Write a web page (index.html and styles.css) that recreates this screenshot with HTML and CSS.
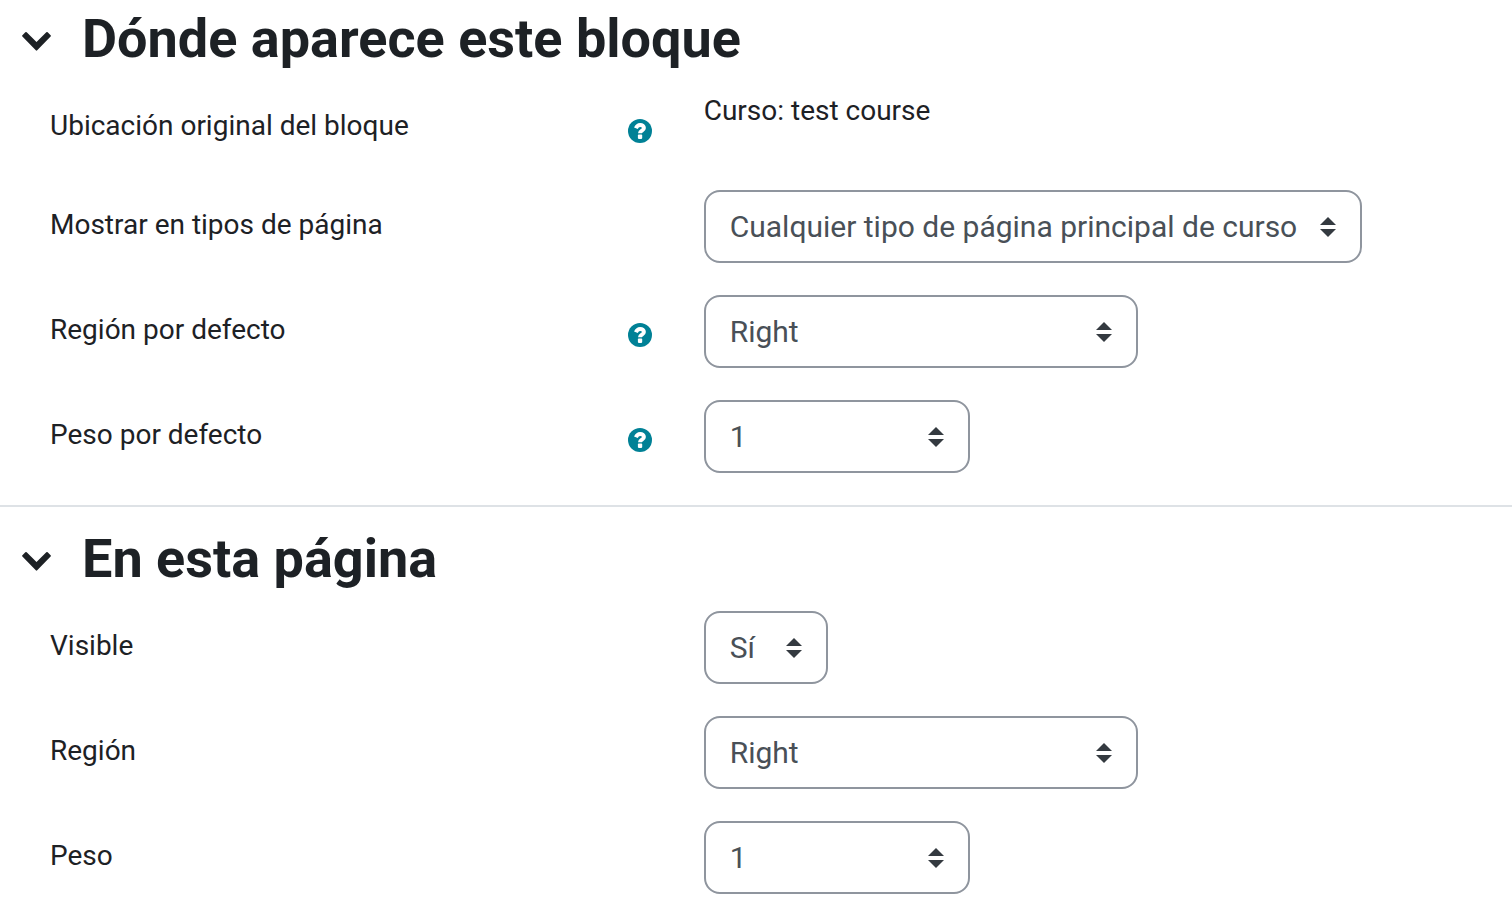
FILE: index.html
```html
<!DOCTYPE html>
<html lang="es">
<head>
    <meta charset="UTF-8">
    <meta name="viewport" content="width=device-width, initial-scale=1.0">
    <title>Configurar bloque</title>
    <link rel="stylesheet" href="styles.css">
</head>
<body>
    <svg class="sprite" aria-hidden="true">
        <symbol id="icon-chevron" viewBox="0 0 30 22">
            <path d="M0.400 6.200 3.300 3.200Q4 2.600 4.700 3.200L14.500 13 24.300 3.200Q25 2.600 25.700 3.200L28.600 6.200Q29.200 6.900 28.600 7.600L15.200 21.300Q14.500 22 13.800 21.300L0.400 7.600Q-0.200 6.900 0.400 6.200z" fill="currentColor"/>
        </symbol>
        <symbol id="icon-help" viewBox="0 0 24 24">
            <circle cx="12" cy="12" r="12" fill="currentColor"/>
            <path d="M7.900 9.300C8.800 7.200 10 6 12.100 6c2.300 0 3.800 1.300 3.800 3 0 2.700-3.900 2.600-3.900 5.300" fill="none" stroke="#fff" stroke-width="4"/>
            <rect x="9.900" y="15.600" width="4.300" height="4.300" rx="0.800" fill="#fff"/>
        </symbol>
        <symbol id="icon-sort" viewBox="0 0 16 20">
            <path d="M0 8 8 0l8 8zM0 12 8 20l8-8z" fill="#343a40"/>
        </symbol>
    </svg>
    <form>
        <section>
            <div class="section-header">
                <button type="button" class="toggle" aria-label="Colapsar"><svg><use href="#icon-chevron"/></svg></button>
                <h2>Dónde aparece este bloque</h2>
            </div>
            <div class="rows">
                <div class="row">
                    <div class="label">
                        <span>Ubicación original del bloque</span>
                        <button type="button" class="help" aria-label="Ayuda"><svg><use href="#icon-help"/></svg></button>
                    </div>
                    <div class="static">Curso: test course</div>
                </div>
                <div class="row">
                    <div class="label">
                        <label for="pagetypes">Mostrar en tipos de página</label>
                    </div>
                    <div class="select wide">
                        <select id="pagetypes"><option>Cualquier tipo de página principal de curso</option></select>
                        <svg><use href="#icon-sort"/></svg>
                    </div>
                </div>
                <div class="row">
                    <div class="label">
                        <label for="defaultregion">Región por defecto</label>
                        <button type="button" class="help" aria-label="Ayuda"><svg><use href="#icon-help"/></svg></button>
                    </div>
                    <div class="select region">
                        <select id="defaultregion"><option>Right</option></select>
                        <svg><use href="#icon-sort"/></svg>
                    </div>
                </div>
                <div class="row">
                    <div class="label">
                        <label for="defaultweight">Peso por defecto</label>
                        <button type="button" class="help" aria-label="Ayuda"><svg><use href="#icon-help"/></svg></button>
                    </div>
                    <div class="select weight">
                        <select id="defaultweight"><option>1</option></select>
                        <svg><use href="#icon-sort"/></svg>
                    </div>
                </div>
            </div>
        </section>
        <section>
            <div class="section-header">
                <button type="button" class="toggle" aria-label="Colapsar"><svg><use href="#icon-chevron"/></svg></button>
                <h2>En esta página</h2>
            </div>
            <div class="rows">
                <div class="row">
                    <div class="label">
                        <label for="visible">Visible</label>
                    </div>
                    <div class="select yesno">
                        <select id="visible"><option>Sí</option><option>No</option></select>
                        <svg><use href="#icon-sort"/></svg>
                    </div>
                </div>
                <div class="row">
                    <div class="label">
                        <label for="region">Región</label>
                    </div>
                    <div class="select region">
                        <select id="region"><option>Right</option></select>
                        <svg><use href="#icon-sort"/></svg>
                    </div>
                </div>
                <div class="row">
                    <div class="label">
                        <label for="weight">Peso</label>
                    </div>
                    <div class="select weight">
                        <select id="weight"><option>1</option></select>
                        <svg><use href="#icon-sort"/></svg>
                    </div>
                </div>
            </div>
        </section>
    </form>
</body>
</html>
```
FILE: styles.css
```css
* {
    box-sizing: border-box;
}

body {
    margin: 0;
    background-color: #fff;
    color: #1d2125;
    font-family: Roboto, 'Liberation Sans', sans-serif;
    font-size: 28px;
    line-height: 40px;
}

.sprite {
    display: none;
}

section {
    padding-top: 20px;
}

section:first-child {
    padding-top: 7px;
    border-bottom: 2px solid #dee2e6;
}

.section-header {
    display: flex;
    align-items: center;
    gap: 30px;
    margin-bottom: 20px;
    padding-left: 22px;
}

h2 {
    margin: 0;
    font-size: 54px;
    line-height: 64px;
    font-weight: 700;
}

button {
    padding: 0;
    border: none;
    background: none;
    cursor: pointer;
}

button svg {
    display: block;
    width: 100%;
    height: 100%;
}

.toggle {
    width: 30px;
    height: 22px;
    margin-top: 2px;
    color: #1d2125;
}

.help {
    width: 24px;
    height: 24px;
    margin-top: 13px;
    color: #008196;
}

.rows {
    display: grid;
    gap: 32px;
    padding: 0 6px 32px 50px;
}

.row {
    display: grid;
    grid-template-columns: minmax(0, 3fr) minmax(0, 4fr);
    column-gap: 52px;
    align-items: start;
}

.label {
    display: flex;
    justify-content: space-between;
    align-items: flex-start;
    min-height: 67px;
    padding-top: 15px;
}

.select {
    position: relative;
    max-width: 100%;
}

.select select {
    appearance: none;
    display: block;
    width: 100%;
    height: 73px;
    padding: 0 56px 0 24px;
    border: 2px solid #8f959e;
    border-radius: 16px;
    background-color: #fff;
    color: #495057;
    font-family: inherit;
    font-size: 30px;
}

.select svg {
    position: absolute;
    top: 27px;
    right: 26px;
    width: 16px;
    height: 20px;
    pointer-events: none;
}

.wide {
    width: 658px;
}

.region {
    width: 434px;
}

.weight {
    width: 266px;
}

.yesno {
    width: 124px;
}
```
